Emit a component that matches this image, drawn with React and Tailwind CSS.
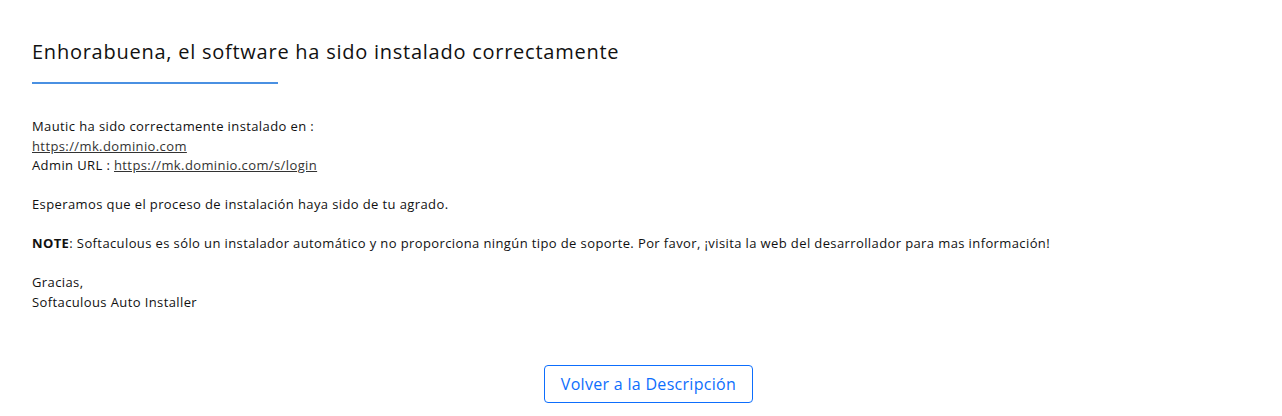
export default function App() {
    return (
        <div className="w-[1282px] h-[416px] bg-white text-black font-['Open_Sans',sans-serif]">
            <div className="px-8 pt-[38px]">
                {/* Title */}
                <h1 className="text-[20px] leading-[28px] tracking-[0.75px] text-[#111]">
                    Enhorabuena, el software ha sido instalado correctamente
                </h1>
                <div className="mt-[16px] w-[246px] h-[2px] bg-[#4a90e2]" />

                {/* Body */}
                <div className="mt-[33px] text-[13px] leading-[19.5px] tracking-[0.39px] text-[#111]">
                    <p>Mautic ha sido correctamente instalado en :</p>
                    <p>
                        <a href="#" className="underline text-[#333]">https://mk.dominio.com</a>
                    </p>
                    <p>
                        Admin URL : <a href="#" className="underline text-[#333]">https://mk.dominio.com/s/login</a>
                    </p>
                    <p className="mt-[19.5px]">Esperamos que el proceso de instalación haya sido de tu agrado.</p>
                    <p className="mt-[19.5px]">
                        <b>NOTE</b>: Softaculous es sólo un instalador automático y no proporciona ningún tipo de soporte. Por favor, ¡visita la web del desarrollador para mas información!
                    </p>
                    <p className="mt-[19.5px]">Gracias,</p>
                    <p>Softaculous Auto Installer</p>
                </div>

                {/* Action */}
                <div className="mt-[53px] pl-[15px] flex justify-center">
                    <button className="h-[38px] w-[209px] border border-[#0d6efd] rounded-[4px] text-[16px] tracking-[0.3px] text-[#0d6efd]">
                        Volver a la Descripción
                    </button>
                </div>
            </div>
        </div>
    );
}
